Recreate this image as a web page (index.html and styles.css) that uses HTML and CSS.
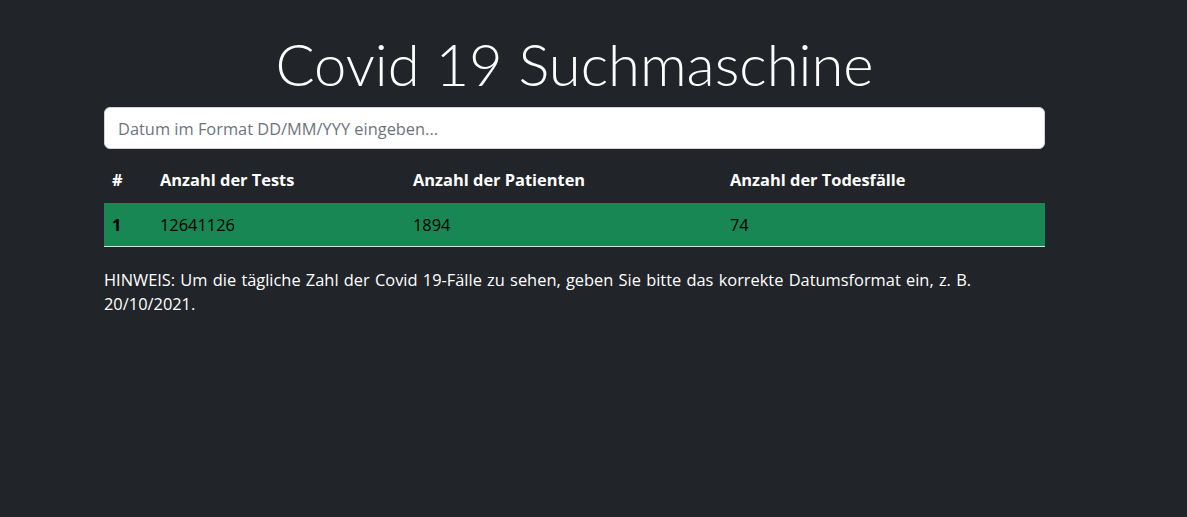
FILE: index.html
```html
<!DOCTYPE html>
<html lang="de">
<head>
<meta charset="utf-8">
<title>Covid 19 Suchmaschine</title>
<link rel="stylesheet" href="styles.css">
</head>
<body>
<main class="page">
  <div class="container">
    <h1 class="title">Covid 19 Suchmaschine</h1>
    <input class="search" type="text" placeholder="Datum im Format DD/MM/YYY eingeben...">
    <table class="data">
      <thead>
        <tr>
          <th class="c1">#</th>
          <th class="c2">Anzahl der Tests</th>
          <th class="c3">Anzahl der Patienten</th>
          <th class="c4">Anzahl der Todesfälle</th>
        </tr>
      </thead>
      <tbody>
        <tr class="row-success">
          <th>1</th>
          <td>12641126</td>
          <td>1894</td>
          <td>74</td>
        </tr>
      </tbody>
    </table>
    <p class="note">HINWEIS: Um die tägliche Zahl der Covid 19-Fälle zu sehen, geben Sie bitte das korrekte Datumsformat ein, z. B. 20/10/2021.</p>
  </div>
</main>
</body>
</html>
```
FILE: styles.css
```css
html, body {
  margin: 0;
  padding: 0;
  background: #212529;
  height: 100%;
}
body {
  font-family: "Open Sans", "Noto Sans", sans-serif;
  font-size: 16.4px;
  line-height: 24px;
  color: #ffffff;
}
.page {
  padding-left: 104px;
}
.container {
  width: 941px;
  display: flex;
  flex-direction: column;
}
.title {
  margin: 28px 0 0 0;
  height: 79px;
  font-family: "Lato", "Open Sans", sans-serif;
  font-size: 58px;
  font-weight: 300;
  line-height: 72px;
  text-align: center;
  color: #ffffff;
}
.search {
  box-sizing: border-box;
  width: 941px;
  height: 42px;
  margin: 0;
  padding: 0 13px;
  border: 1px solid #ced4da;
  border-radius: 6px;
  background: #ffffff;
  font-family: inherit;
  font-size: 16.4px;
  color: #212529;
  outline: none;
}
.search::placeholder {
  color: #6c757d;
  opacity: 1;
}
.data {
  margin-top: 10px;
  margin-bottom: 21px;
  width: 941px;
  border-collapse: collapse;
  table-layout: fixed;
}
.data th, .data td {
  text-align: left;
  padding: 10px 8px;
  line-height: 24px;
  vertical-align: top;
}
.data thead th {
  padding-top: 9px;
  padding-bottom: 11px;
  font-weight: 700;
  color: #ffffff;
}
.c1 { width: 32px; }
.c2 { width: 237px; }
.c3 { width: 301px; }
.c4 { width: auto; }
.row-success {
  background: #198754;
  color: #000000;
  border-bottom: 1px solid #d1e7dd;
}
.row-success th, .row-success td {
  padding-bottom: 9px;
  font-weight: 400;
}
.row-success th {
  font-weight: 700;
}
.note {
  margin: 0;
  color: #ffffff;
  word-spacing: 1px;
}
```
